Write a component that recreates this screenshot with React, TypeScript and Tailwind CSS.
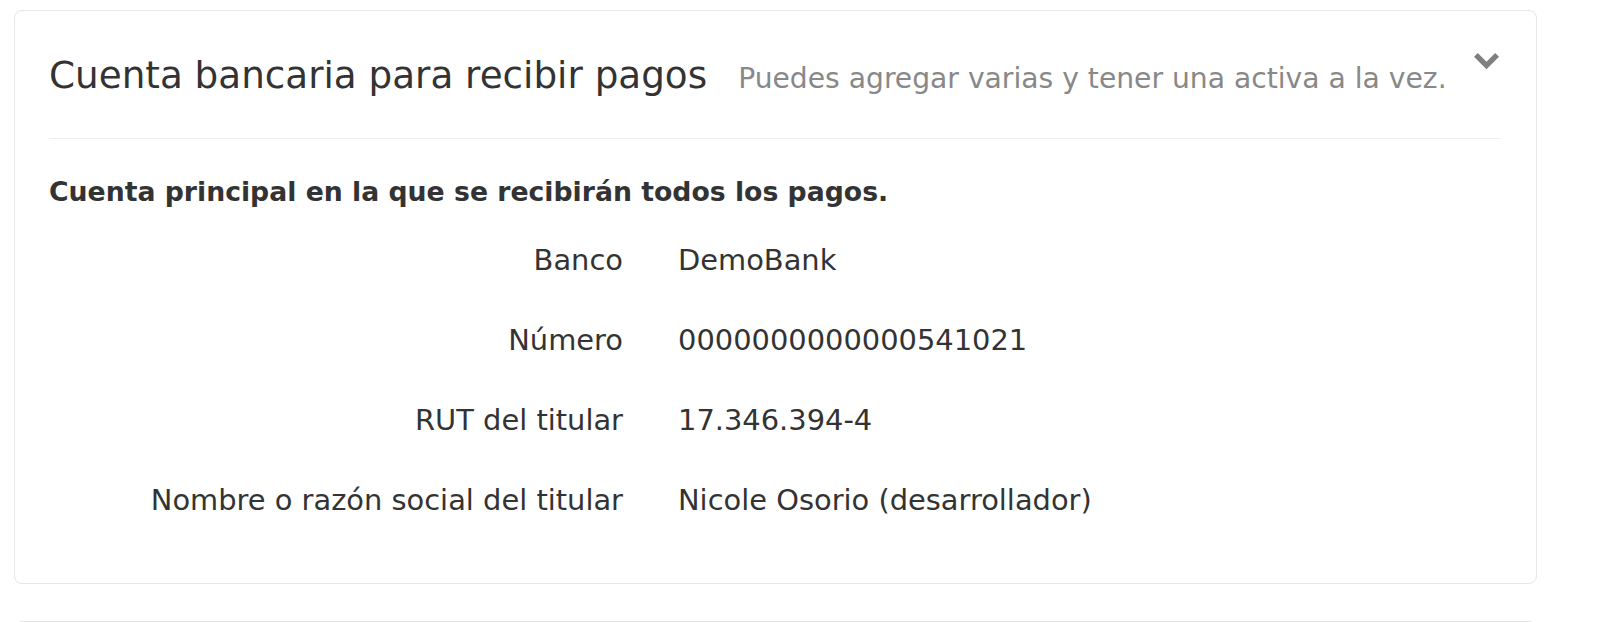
import React from 'react';

const ACCOUNT_ROWS: { label: string; value: string }[] = [
  { label: 'Banco', value: 'DemoBank' },
  { label: 'Número', value: '0000000000000541021' },
  { label: 'RUT del titular', value: '17.346.394-4' },
  { label: 'Nombre o razón social del titular', value: 'Nicole Osorio (desarrollador)' },
];

const ChevronDown: React.FC = () => (
  <svg width="25" height="17" viewBox="0 0 25 17" className="mt-[6px] mr-[2px] shrink-0 text-[#7f7f7f]">
    <path d="M0 3.8 L3.8 0 L12.5 8.7 L21.2 0 L25 3.8 L12.5 16.3 Z" fill="currentColor" />
  </svg>
);

const BankAccountCard: React.FC = () => (
  <section className="rounded-[8px] border border-[#e6e6e6] bg-white pt-[36px] pb-[63px] pl-[34px] pr-[35px]">
    <header className="flex items-start justify-between border-b border-[#eeeeee] pb-[35px]">
      <div className="flex items-baseline">
        <h2 className="text-[37.3px] leading-[56px] font-normal text-[#333333]">Cuenta bancaria para recibir pagos</h2>
        <span className="ml-[31px] text-[28.2px] leading-[40px] text-[#888888]">Puedes agregar varias y tener una activa a la vez.</span>
      </div>
      <ChevronDown />
    </header>

    <h3 className="mt-[35px] text-[26.7px] leading-[36px] font-bold text-[#333333]">
      Cuenta principal en la que se recibirán todos los pagos.
    </h3>

    <dl className="mt-[30px] grid grid-cols-[574px_1fr] gap-x-[55px] gap-y-[40px] text-[28.9px] leading-[40px] text-[#333333]">
      {ACCOUNT_ROWS.map(row => (
        <React.Fragment key={row.label}>
          <dt className="text-right">{row.label}</dt>
          <dd>{row.value}</dd>
        </React.Fragment>
      ))}
    </dl>
  </section>
);

const App: React.FC = () => {
  return (
    <div className="min-h-screen bg-white font-['DejaVu_Sans',Verdana,sans-serif]">
      <div className="w-[1523px] ml-[14px] pt-[10px]">
        <BankAccountCard />
        <section className="mt-[37px] h-[200px] rounded-[8px] border border-[#e6e6e6] bg-white" />
      </div>
    </div>
  );
};

export default App;
